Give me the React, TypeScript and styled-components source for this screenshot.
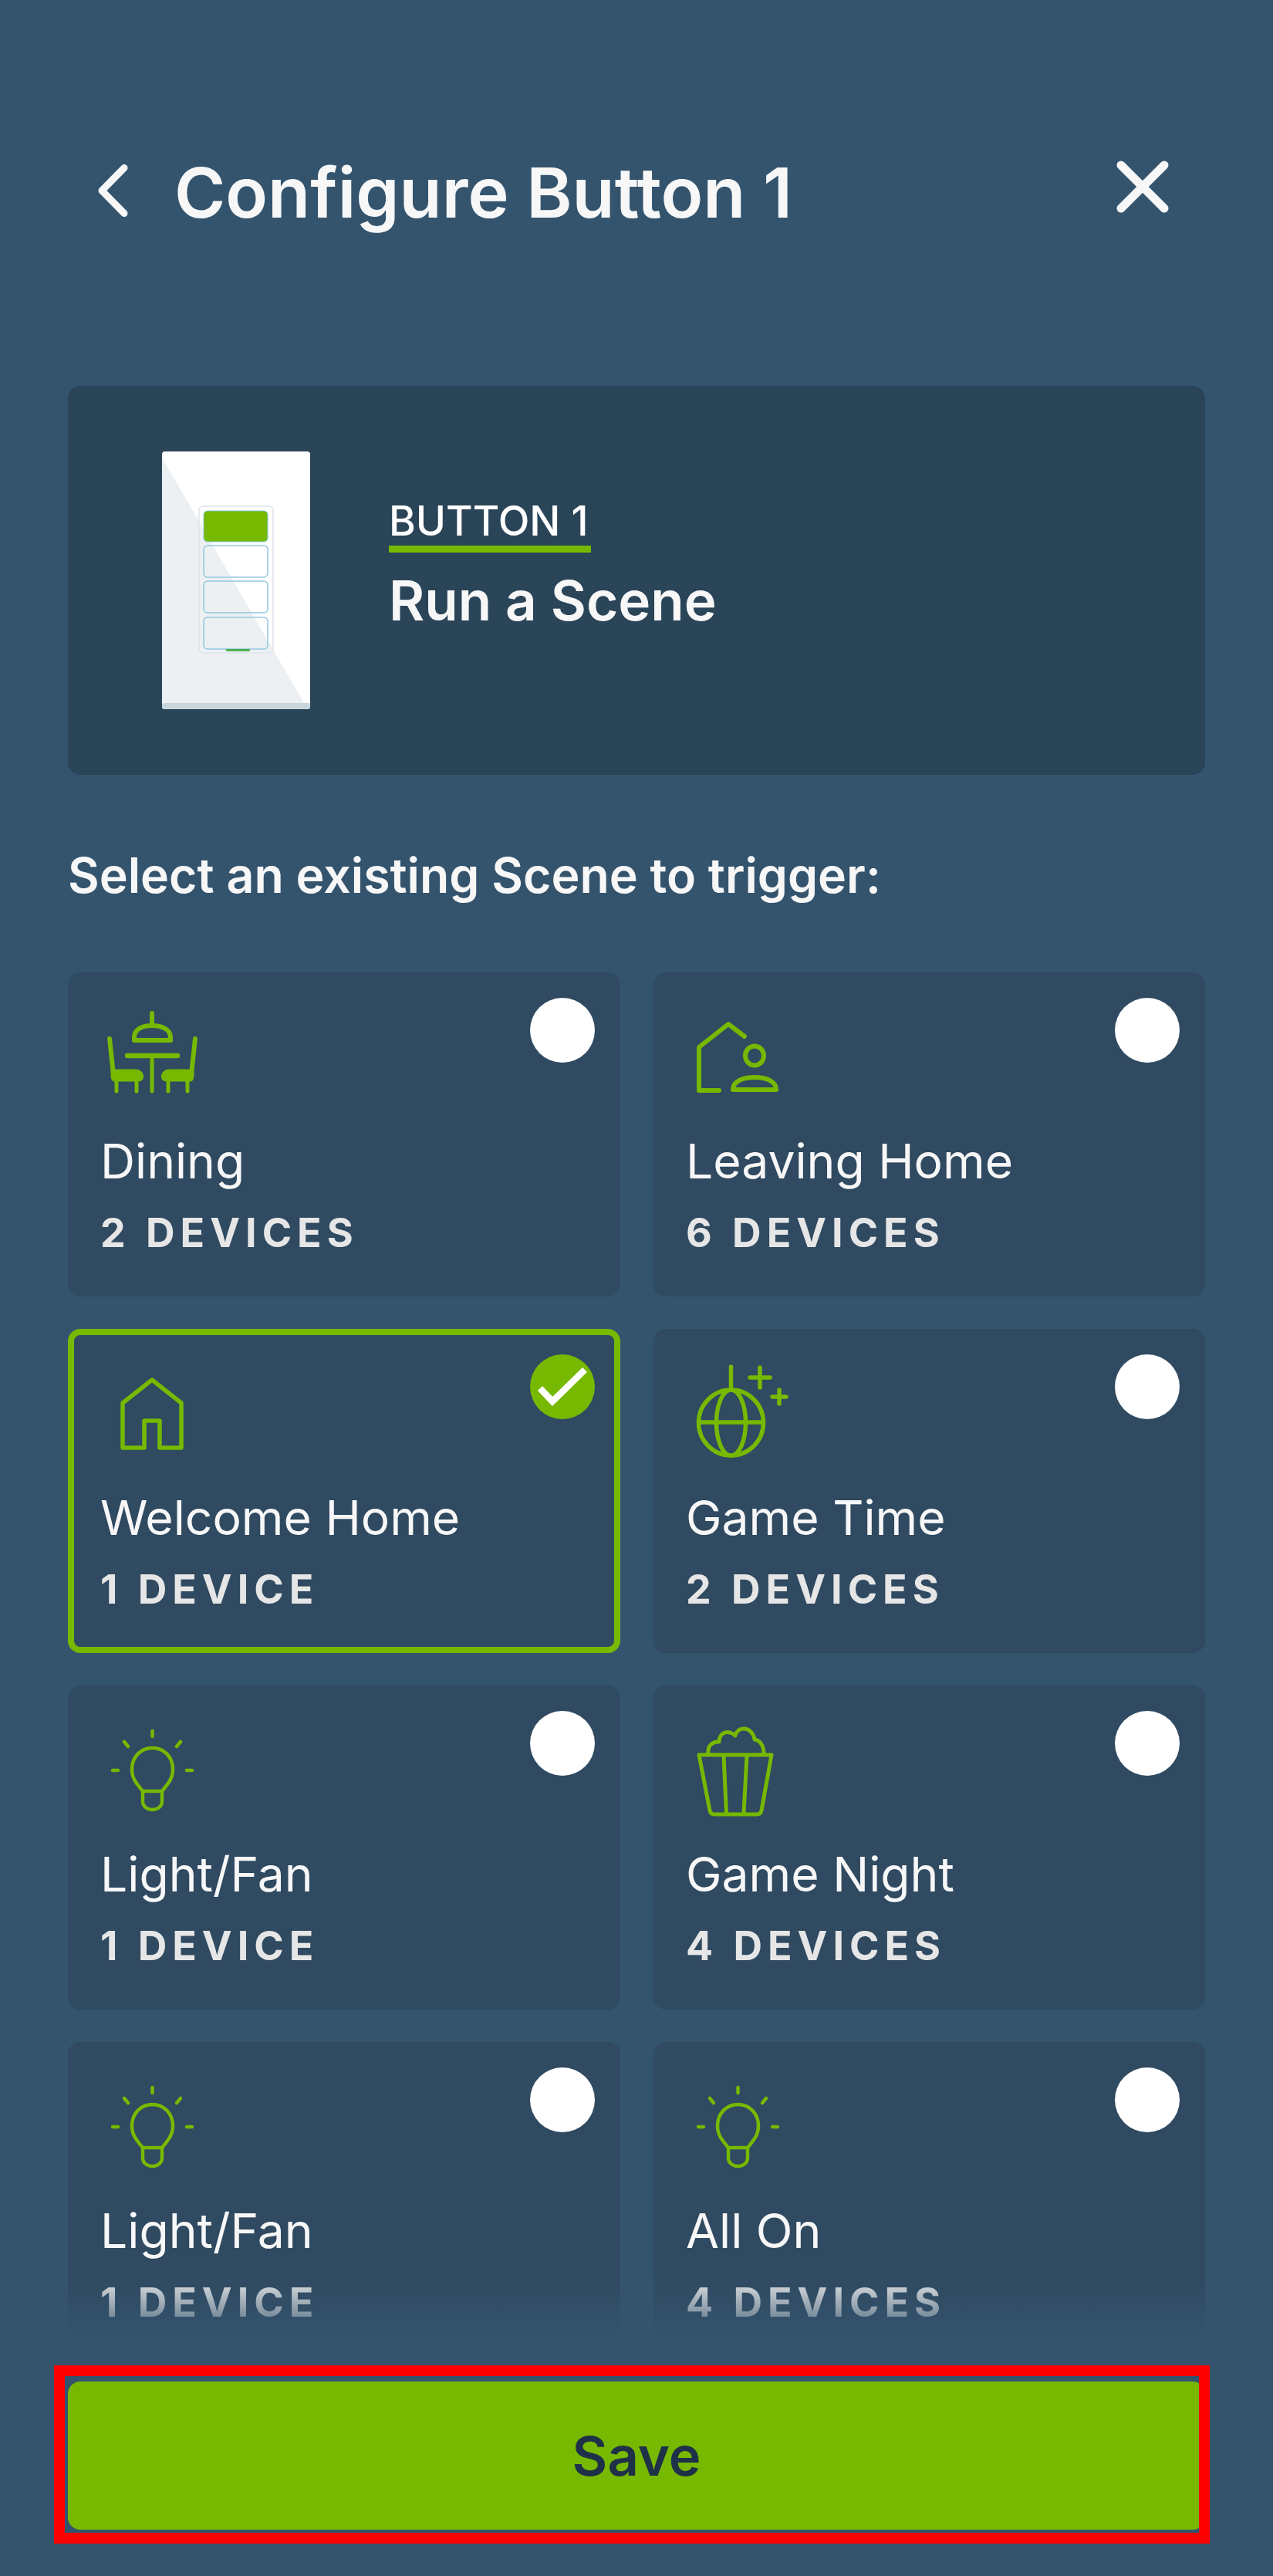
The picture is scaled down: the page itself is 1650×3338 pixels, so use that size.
import React from 'react'
import styled, { createGlobalStyle } from 'styled-components'

const GREEN = '#76b900'

const Global = createGlobalStyle`
  html, body { margin: 0; padding: 0; background: #34546e; }
  * { box-sizing: border-box; }
`

const Page = styled.div`
  position: relative;
  width: 1650px;
  height: 3338px;
  overflow: hidden;
  background: #34546e;
  font-family: Inter, "Noto Sans", sans-serif;
  color: #f7f7f7;
  display: flex;
  flex-direction: column;
  padding: 0 88px;
`

const Header = styled.header`
  height: 500px;
  flex: none;
  display: flex;
  align-items: center;
  justify-content: space-between;
  padding: 0 47px 0 38px;
`

const HeaderLeft = styled.div`
  display: flex;
  align-items: center;
  gap: 60px;
`

const Title = styled.h1`
  margin: 0;
  font-size: 90px;
  line-height: 100px;
  font-weight: 600;
`

const BackSlot = styled.div`
  display: flex;
  margin-bottom: 6px;
`

const CloseSlot = styled.div`
  display: flex;
  margin-bottom: 17px;
`

const Hero = styled.section`
  flex: none;
  height: 504px;
  background: #2a4458;
  border-radius: 16px;
  display: flex;
  align-items: center;
  padding-left: 122px;
  gap: 102px;
`

const HeroText = styled.div`
  display: flex;
  flex-direction: column;
  margin-bottom: 40px;
`

const HeroLabel = styled.div`
  align-self: flex-start;
  font-size: 53px;
  line-height: 56px;
  font-weight: 500;
  color: #fff;
  padding: 0 4px 4px 0;
  border-bottom: 9px solid ${GREEN};
`

const HeroName = styled.div`
  font-size: 71px;
  line-height: 80px;
  font-weight: 600;
  margin-top: 22px;
`

const Prompt = styled.p`
  flex: none;
  margin: 94px 0 90px;
  font-size: 62.6px;
  line-height: 72px;
  font-weight: 600;
`

const List = styled.div`
  height: 1780px;
  flex: none;
  overflow: hidden;
  display: grid;
  grid-template-columns: 716px 715px;
  grid-auto-rows: 420px;
  column-gap: 43px;
  row-gap: 42px;
  align-content: start;
`

const Card = styled.div<{ $selected?: boolean }>`
  position: relative;
  background: #2f4a61;
  border-radius: 16px;
  border: ${p => (p.$selected ? `8px solid ${GREEN}` : 'none')};
  padding: ${p => (p.$selected ? '32px 34px 0' : '40px 42px 0')};
  display: flex;
  flex-direction: column;
`

const IconSlot = styled.div`
  width: 136px;
  height: 136px;
  flex: none;
  svg { display: block; }
`

const CardName = styled.div`
  font-size: 62.4px;
  line-height: 74px;
  font-weight: 400;
  color: #f7f7f7;
  margin-top: 32px;
`

const CardCount = styled.div`
  font-size: 52px;
  line-height: 60px;
  font-weight: 700;
  letter-spacing: 7px;
  color: #e6e6e6;
  margin-top: 26px;
`

const Radio = styled.div<{ $selected?: boolean }>`
  position: absolute;
  top: ${p => (p.$selected ? '25px' : '33px')};
  right: ${p => (p.$selected ? '25px' : '33px')};
  width: 84px;
  height: 84px;
  border-radius: 50%;
  background: ${p => (p.$selected ? GREEN : '#fff')};
  display: flex;
  align-items: center;
  justify-content: center;
`

const Fade = styled.div`
  position: absolute;
  left: 0;
  right: 0;
  top: 2950px;
  height: 95px;
  background: linear-gradient(to bottom, rgba(52, 84, 110, 0), #34546e 90%);
`

const Footer = styled.footer`
  flex: none;
  margin-top: auto;
  height: 252px;
`

const SaveButton = styled.button`
  display: block;
  width: 100%;
  height: 192px;
  border: none;
  border-radius: 16px;
  background: ${GREEN};
  color: #1f3049;
  font-family: inherit;
  font-size: 70.5px;
  font-weight: 600;
`

const Highlight = styled.div`
  position: absolute;
  left: 70px;
  top: 3065px;
  width: 1498px;
  height: 231px;
  border: 14px solid #ff0000;
`

const BackIcon = () => (
  <svg width="40" height="68" viewBox="0 0 40 68" fill="none" stroke="#f7f7f7" strokeWidth="9" strokeLinecap="round" strokeLinejoin="round">
    <path d="M35 4.5 L6 34 L35 63.5" />
  </svg>
)

const CloseIcon = () => (
  <svg width="68" height="68" viewBox="0 0 68 68" fill="none" stroke="#f7f7f7" strokeWidth="11" strokeLinecap="round">
    <path d="M6 6 L62 62 M62 6 L6 62" />
  </svg>
)

const CheckIcon = () => (
  <svg width="64" height="50" viewBox="0 0 64 50" fill="none" stroke="#fff" strokeWidth="8.5">
    <path d="M3 27 L19 44 L61 3" />
  </svg>
)

const Icon = ({ children, sw }: { children: React.ReactNode; sw: number }) => (
  <svg width="136" height="136" viewBox="0 0 136 136" fill="none" stroke={GREEN} strokeWidth={sw} strokeLinecap="round" strokeLinejoin="round">
    {children}
  </svg>
)

const DiningIcon = () => (
  <Icon sw={5}>
    <path d="M67 13 V28" strokeWidth="6" />
    <path d="M44 48 V44 C44 34 54 29 67 29 C80 29 91 34 91 44 V48 Z" strokeWidth="6" />
    <path d="M35 68 H100" strokeWidth="6.5" />
    <path d="M67 70 V114" />
    <path d="M12 46 L17 92 M123 46 L118 92" strokeWidth="6" />
    <path d="M16 88 H46 C54 88 57 99 49 99 H18 C16 99 16 94 16 88 Z" fill={GREEN} />
    <path d="M119 88 H89 C81 88 78 99 86 99 H117 C119 99 119 94 119 88 Z" fill={GREEN} />
    <path d="M21 100 V114 M47 100 V114 M88 100 V114 M113 100 V114" />
  </Icon>
)

const LeavingHomeIcon = () => (
  <Icon sw={6}>
    <path d="M43 113 H17 V57 L55 27 L76 43" />
    <ellipse cx="89" cy="68" rx="12" ry="12.5" />
    <path d="M61 112 C61 101 74 96 89 96 C104 96 117 101 117 112 Z" />
  </Icon>
)

const HomeIcon = () => (
  <Icon sw={5.5}>
    <path d="M67 26 L105 56 V114 H77 V79 H57 V114 H29 V56 Z" />
  </Icon>
)

const DiscoIcon = () => (
  <Icon sw={5.5}>
    <path d="M58.5 9 V38" />
    <ellipse cx="58.5" cy="81.5" rx="42" ry="42.5" />
    <ellipse cx="58.5" cy="81.5" rx="19" ry="42.5" />
    <path d="M17 81 H100" />
    <path d="M96 10 V36 M83 23 H109" />
    <path d="M121 39 V57 M112 48 H130" />
  </Icon>
)

const BulbIcon = () => (
  <Icon sw={4.5}>
    <path d="M67.5 19 V26 M31 33 L36 39 M104 33 L99 39 M16 70 H23 M112 70 H119" />
    <path d="M55 97 C46 86 41 80 41 69 C41 52 53 41 67.5 41 C82 41 94 52 94 69 C94 80 89 86 80 97 Z" />
    <path d="M55 97 V110 C55 117 61 121 67.5 121 C74 121 80 117 80 110 V97" />
  </Icon>
)

const PopcornIcon = () => (
  <Icon sw={5}>
    <path d="M17 50 H111 L98 122 Q97 127 92 127 H37 Q32 127 31 122 Z" />
    <path d="M49 51 L52.5 126 M79 51 L75 126" />
    <path d="M29 48 C28 38 34 33 43 33 C43 24 50 19 57 21 C60 22 62 23 64 25 C66 18 71 16 75 16 C83 16 88 23 89 30 C96 31 101 38 101 48" />
  </Icon>
)

const scenes = [
  { name: 'Dining', count: '2 DEVICES', icon: <DiningIcon /> },
  { name: 'Leaving Home', count: '6 DEVICES', icon: <LeavingHomeIcon /> },
  { name: 'Welcome Home', count: '1 DEVICE', icon: <HomeIcon />, selected: true },
  { name: 'Game Time', count: '2 DEVICES', icon: <DiscoIcon /> },
  { name: 'Light/Fan', count: '1 DEVICE', icon: <BulbIcon /> },
  { name: 'Game Night', count: '4 DEVICES', icon: <PopcornIcon /> },
  { name: 'Light/Fan', count: '1 DEVICE', icon: <BulbIcon /> },
  { name: 'All On', count: '4 DEVICES', icon: <BulbIcon /> },
]

const SwitchArt = () => (
  <svg width="192" height="334" viewBox="0 0 192 334">
    <rect x="0" y="0" width="192" height="334" rx="4" fill="#fff" />
    <path d="M0 8 L184 326 H0 Z" fill="#edf0f3" />
    <rect x="0" y="326" width="192" height="8" rx="3" fill="#c9d5dd" />
    <rect x="48" y="71" width="96" height="190" rx="5" fill="none" stroke="#dde5ec" strokeWidth="1.5" />
    <rect x="54" y="77" width="83" height="40" rx="5" fill={GREEN} stroke="#8cc4dc" strokeWidth="1" />
    <rect x="54" y="122" width="83" height="41" rx="5" fill="none" stroke="#93c8de" strokeWidth="1.5" />
    <rect x="54" y="168" width="83" height="41" rx="5" fill="none" stroke="#93c8de" strokeWidth="1.5" />
    <rect x="54" y="215" width="83" height="41" rx="5" fill="none" stroke="#93c8de" strokeWidth="1.5" />
    <rect x="83" y="256" width="31" height="3" rx="1" fill="#4caf50" />
  </svg>
)

export default function App () {
  return (
    <Page>
      <Global />
      <Header>
        <HeaderLeft>
          <BackSlot><BackIcon /></BackSlot>
          <Title>Configure Button 1</Title>
        </HeaderLeft>
        <CloseSlot><CloseIcon /></CloseSlot>
      </Header>
      <Hero>
        <SwitchArt />
        <HeroText>
          <HeroLabel>BUTTON 1</HeroLabel>
          <HeroName>Run a Scene</HeroName>
        </HeroText>
      </Hero>
      <Prompt>Select an existing Scene to trigger:</Prompt>
      <List>
        {scenes.map((s, i) => (
          <Card key={i} $selected={s.selected}>
            <IconSlot>{s.icon}</IconSlot>
            <CardName>{s.name}</CardName>
            <CardCount>{s.count}</CardCount>
            <Radio $selected={s.selected}>{s.selected && <CheckIcon />}</Radio>
          </Card>
        ))}
      </List>
      <Fade />
      <Footer>
        <SaveButton>Save</SaveButton>
      </Footer>
      <Highlight />
    </Page>
  )
}
